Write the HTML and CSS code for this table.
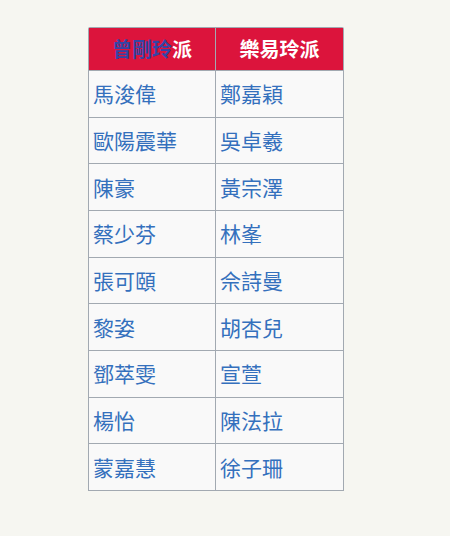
FILE: index.html
```html
<!DOCTYPE html>
<html lang="zh-Hant">
<head>
<meta charset="utf-8">
<title>派系</title>
<link rel="stylesheet" href="styles.css">
</head>
<body>
<div class="page">
  <div class="factions" role="table">
    <div class="head" role="columnheader"><a class="link-head" href="#">曾剛玲</a>派</div>
    <div class="head" role="columnheader">樂易玲派</div>
    <div class="cell"><a href="#">馬浚偉</a></div>
    <div class="cell"><a href="#">鄭嘉穎</a></div>
    <div class="cell"><a href="#">歐陽震華</a></div>
    <div class="cell"><a href="#">吳卓羲</a></div>
    <div class="cell"><a href="#">陳豪</a></div>
    <div class="cell"><a href="#">黃宗澤</a></div>
    <div class="cell"><a href="#">蔡少芬</a></div>
    <div class="cell"><a href="#">林峯</a></div>
    <div class="cell"><a href="#">張可頤</a></div>
    <div class="cell"><a href="#">佘詩曼</a></div>
    <div class="cell"><a href="#">黎姿</a></div>
    <div class="cell"><a href="#">胡杏兒</a></div>
    <div class="cell"><a href="#">鄧萃雯</a></div>
    <div class="cell"><a href="#">宣萱</a></div>
    <div class="cell"><a href="#">楊怡</a></div>
    <div class="cell"><a href="#">陳法拉</a></div>
    <div class="cell"><a href="#">蒙嘉慧</a></div>
    <div class="cell"><a href="#">徐子珊</a></div>
  </div>
</div>
</body>
</html>
```
FILE: styles.css
```css
html, body {
  margin: 0;
  padding: 0;
  background: #f6f6f1;
}
body {
  font-family: "Noto Sans CJK TC", "Noto Sans", sans-serif;
}
.page {
  padding: 27px 0 0 88px;
}
.factions {
  display: grid;
  width: 256px;
  box-sizing: border-box;
  grid-template-columns: 126px 127px;
  grid-template-rows: 42px repeat(9, 45.67px);
  gap: 1px;
  padding: 1px;
  background: #a2a9b1;
  border-radius: 2px 2px 0 0;
}
.head {
  background: #dc143c;
  color: #ffffff;
  font-weight: bold;
  font-size: 20px;
  display: flex;
  align-items: center;
  justify-content: center;
  line-height: 1;
}
.link-head {
  color: #3345a6;
  text-decoration: none;
}
.cell {
  background: #f9f9f9;
  display: flex;
  align-items: center;
  padding-left: 4px;
  font-size: 21px;
  line-height: 1;
}
.cell a {
  color: #3470bd;
  text-decoration: none;
}
```
